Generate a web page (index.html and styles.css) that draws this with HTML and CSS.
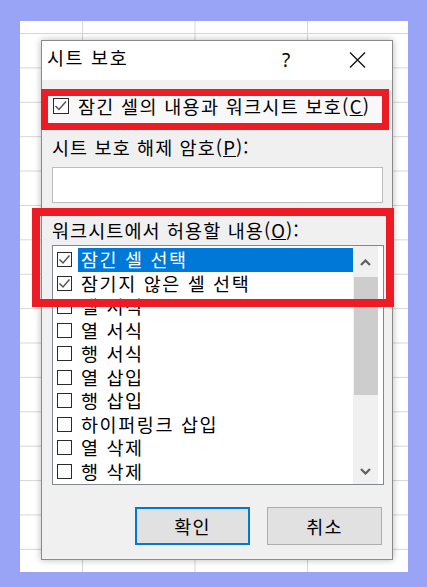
FILE: index.html
```html
<!DOCTYPE html>
<html lang="ko">
<head>
<meta charset="utf-8">
<title>시트 보호</title>
<link rel="stylesheet" href="styles.css">
</head>
<body>
<div class="sheet">
  <div class="dialog">
    <div class="titlebar">
      <span class="title">시트 보호</span>
      <span class="help">?</span>
      <span class="close"><svg width="17" height="16" viewBox="0 0 17 16"><path d="M1 0.5 L16 15.5 M16 0.5 L1 15.5" stroke="#111" stroke-width="1.3" fill="none"/></svg></span>
    </div>
    <div class="body">
      <div class="protect-row">
        <svg class="cb cb-lg" viewBox="0 0 16 16"><rect x="0.5" y="0.5" width="15" height="15" fill="#fff" stroke="#2b2b2b"/><polyline points="2.5,8 6,11.5 13,3.5" fill="none" stroke="#555" stroke-width="1.5"/></svg>
        <span class="protect-text">잠긴 셀의 내용과 워크시트 보호(<u>C</u>)</span>
      </div>
      <div class="label label-pw">시트 보호 해제 암호(<u>P</u>):</div>
      <div class="input"></div>
      <div class="label label-allow">워크시트에서 허용할 내용(<u>O</u>):</div>
      <div class="list">
        <div class="rows">
          <div class="row"><svg class="cb" viewBox="0 0 15 15"><rect x="0.5" y="0.5" width="14" height="14" fill="#fff" stroke="#2b2b2b"/><polyline points="2.5,7.5 6,11 12.5,3.5" fill="none" stroke="#555" stroke-width="1.5"/></svg><span class="item selected">잠긴 셀 선택</span></div>
          <div class="row"><svg class="cb" viewBox="0 0 15 15"><rect x="0.5" y="0.5" width="14" height="14" fill="#fff" stroke="#2b2b2b"/><polyline points="2.5,7.5 6,11 12.5,3.5" fill="none" stroke="#555" stroke-width="1.5"/></svg><span class="item">잠기지 않은 셀 선택</span></div>
          <div class="row"><span class="box"></span><span class="item">셀 서식</span></div>
          <div class="row"><span class="box"></span><span class="item">열 서식</span></div>
          <div class="row"><span class="box"></span><span class="item">행 서식</span></div>
          <div class="row"><span class="box"></span><span class="item">열 삽입</span></div>
          <div class="row"><span class="box"></span><span class="item">행 삽입</span></div>
          <div class="row"><span class="box"></span><span class="item">하이퍼링크 삽입</span></div>
          <div class="row"><span class="box"></span><span class="item">열 삭제</span></div>
          <div class="row"><span class="box"></span><span class="item">행 삭제</span></div>
        </div>
        <div class="scrollbar">
          <div class="arrow arrow-up"><svg width="11" height="7" viewBox="0 0 11 7"><polyline points="1,6 5.5,1.5 10,6" fill="none" stroke="#5f5f5f" stroke-width="2.2"/></svg></div>
          <div class="thumb"></div>
          <div class="track"></div>
          <div class="arrow arrow-down"><svg width="11" height="7" viewBox="0 0 11 7"><polyline points="1,1 5.5,5.5 10,1" fill="none" stroke="#5f5f5f" stroke-width="2.2"/></svg></div>
        </div>
      </div>
      <div class="buttons">
        <button class="btn btn-default">확인</button>
        <button class="btn">취소</button>
      </div>
    </div>
    <div class="mark mark-1"></div>
    <div class="mark mark-2"></div>
  </div>
</div>
</body>
</html>
```
FILE: styles.css
```css
html, body {
  margin: 0;
  padding: 0;
}
body {
  width: 427px;
  height: 587px;
  background: #9aa4f7;
  font-family: "Noto Sans CJK KR", "Noto Sans", sans-serif;
  color: #000;
  overflow: hidden;
}
.sheet {
  box-sizing: border-box;
  margin: 21px 0 0 20px;
  width: 388px;
  height: 551px;
  padding: 19px 0 0 21px;
  background-color: #fff;
  background-image:
    linear-gradient(to right, #d6d6d6 1px, transparent 1px),
    linear-gradient(to bottom, #d6d6d6 1px, transparent 1px);
  background-size: 112.5px 100%, 100% 34.4px;
  background-position: 62px 0, 0 12px;
}
.dialog {
  position: relative;
  box-sizing: border-box;
  width: 352px;
  height: 520px;
  border: 1px solid #8a8a8a;
  background: #f0f0f0;
  box-shadow: 0 0 7px rgba(0, 0, 0, 0.28);
  display: flex;
  flex-direction: column;
}
.titlebar {
  box-sizing: border-box;
  height: 39px;
  background: #fff;
  display: flex;
  align-items: flex-start;
  padding: 6px 12px 0 5px;
}
.title {
  flex: 1;
  font-size: 18.5px;
  letter-spacing: 1.6px;
  line-height: 20px;
}
.help {
  width: 46px;
  margin-right: 25px;
  text-align: center;
  font-family: "Noto Sans", sans-serif;
  font-size: 19px;
  line-height: 20px;
  margin-top: 3px;
}
.close {
  width: 46px;
  display: flex;
  justify-content: center;
  margin-top: 5px;
}
.close svg, .arrow svg {
  display: block;
  flex-shrink: 0;
}
.cb {
  display: block;
  flex: 0 0 15px;
  width: 15px;
  height: 15px;
}
.cb-lg {
  flex-basis: 16px;
  width: 16px;
  height: 16px;
  margin-top: 2px;
}
.body {
  flex: 1;
  display: flex;
  flex-direction: column;
}
.protect-row {
  box-sizing: border-box;
  margin: 16px 0 0 6px;
  width: 334px;
  height: 27px;
  background: #f8f8f8;
  display: flex;
  align-items: flex-start;
  padding-left: 5px;
  gap: 9px;
}
.protect-text {
  font-size: 18.5px;
  letter-spacing: 1.3px;
  line-height: 21px;
  white-space: nowrap;
}
.label {
  margin-left: 10px;
  font-size: 18.5px;
  letter-spacing: 1.1px;
  line-height: 20px;
  white-space: nowrap;
}
.label-pw {
  margin-top: 14px;
}
.input {
  box-sizing: border-box;
  margin: 10px 0 0 10px;
  width: 331px;
  height: 36px;
  background: #fff;
  border: 1px solid #bcbcbc;
}
.label-allow {
  margin-top: 17px;
}
.list {
  box-sizing: border-box;
  margin: 5px 0 0 10px;
  width: 332px;
  height: 240px;
  border: 1px solid #828790;
  background: #fff;
  display: flex;
  overflow: hidden;
}
.rows {
  flex: 1;
  min-width: 0;
  padding-top: 2px;
}
.row {
  height: 23.5px;
  display: flex;
  align-items: center;
  padding-left: 4px;
}
.box {
  box-sizing: border-box;
  flex: 0 0 15px;
  width: 15px;
  height: 15px;
  border: 1px solid #2b2b2b;
  background: #fff;
}
.item {
  flex: 1;
  min-width: 0;
  margin-left: 6px;
  padding-left: 3px;
  height: 23.5px;
  font-size: 18.5px;
  letter-spacing: 1.6px;
  line-height: 23px;
  white-space: nowrap;
}
.selected {
  background: #0078d7;
  color: #fff;
}
.scrollbar {
  flex-shrink: 0;
  width: 25px;
  margin-right: 5px;
  background: #f0f0f0;
  display: flex;
  flex-direction: column;
}
.arrow {
  display: flex;
  justify-content: center;
  align-items: center;
}
.arrow-up {
  height: 31px;
  padding-top: 2px;
  box-sizing: border-box;
}
.thumb {
  margin-left: 1px;
  height: 118px;
  background: #cdcdcd;
}
.track {
  flex: 1;
}
.arrow-down {
  height: 25px;
}
.buttons {
  margin-top: 22px;
  display: flex;
  justify-content: flex-end;
  gap: 17px;
  padding-right: 10px;
}
.btn {
  box-sizing: border-box;
  width: 115px;
  height: 38px;
  margin: 0;
  padding: 0;
  background: #e1e1e1;
  border: 1px solid #adadad;
  font-family: "Noto Sans CJK KR", "Noto Sans", sans-serif;
  font-size: 18.5px;
  letter-spacing: 1.2px;
  color: #000;
}
.btn-default {
  border: 2px solid #0078d7;
}
.mark {
  position: absolute;
  box-sizing: border-box;
  border-style: solid;
  border-color: #ed1c24;
}
.mark-1 {
  left: -1px;
  top: 48px;
  width: 348px;
  height: 41px;
  border-width: 7px;
}
.mark-2 {
  left: -10px;
  top: 167px;
  width: 362px;
  height: 99px;
  border-width: 8px;
}
```
